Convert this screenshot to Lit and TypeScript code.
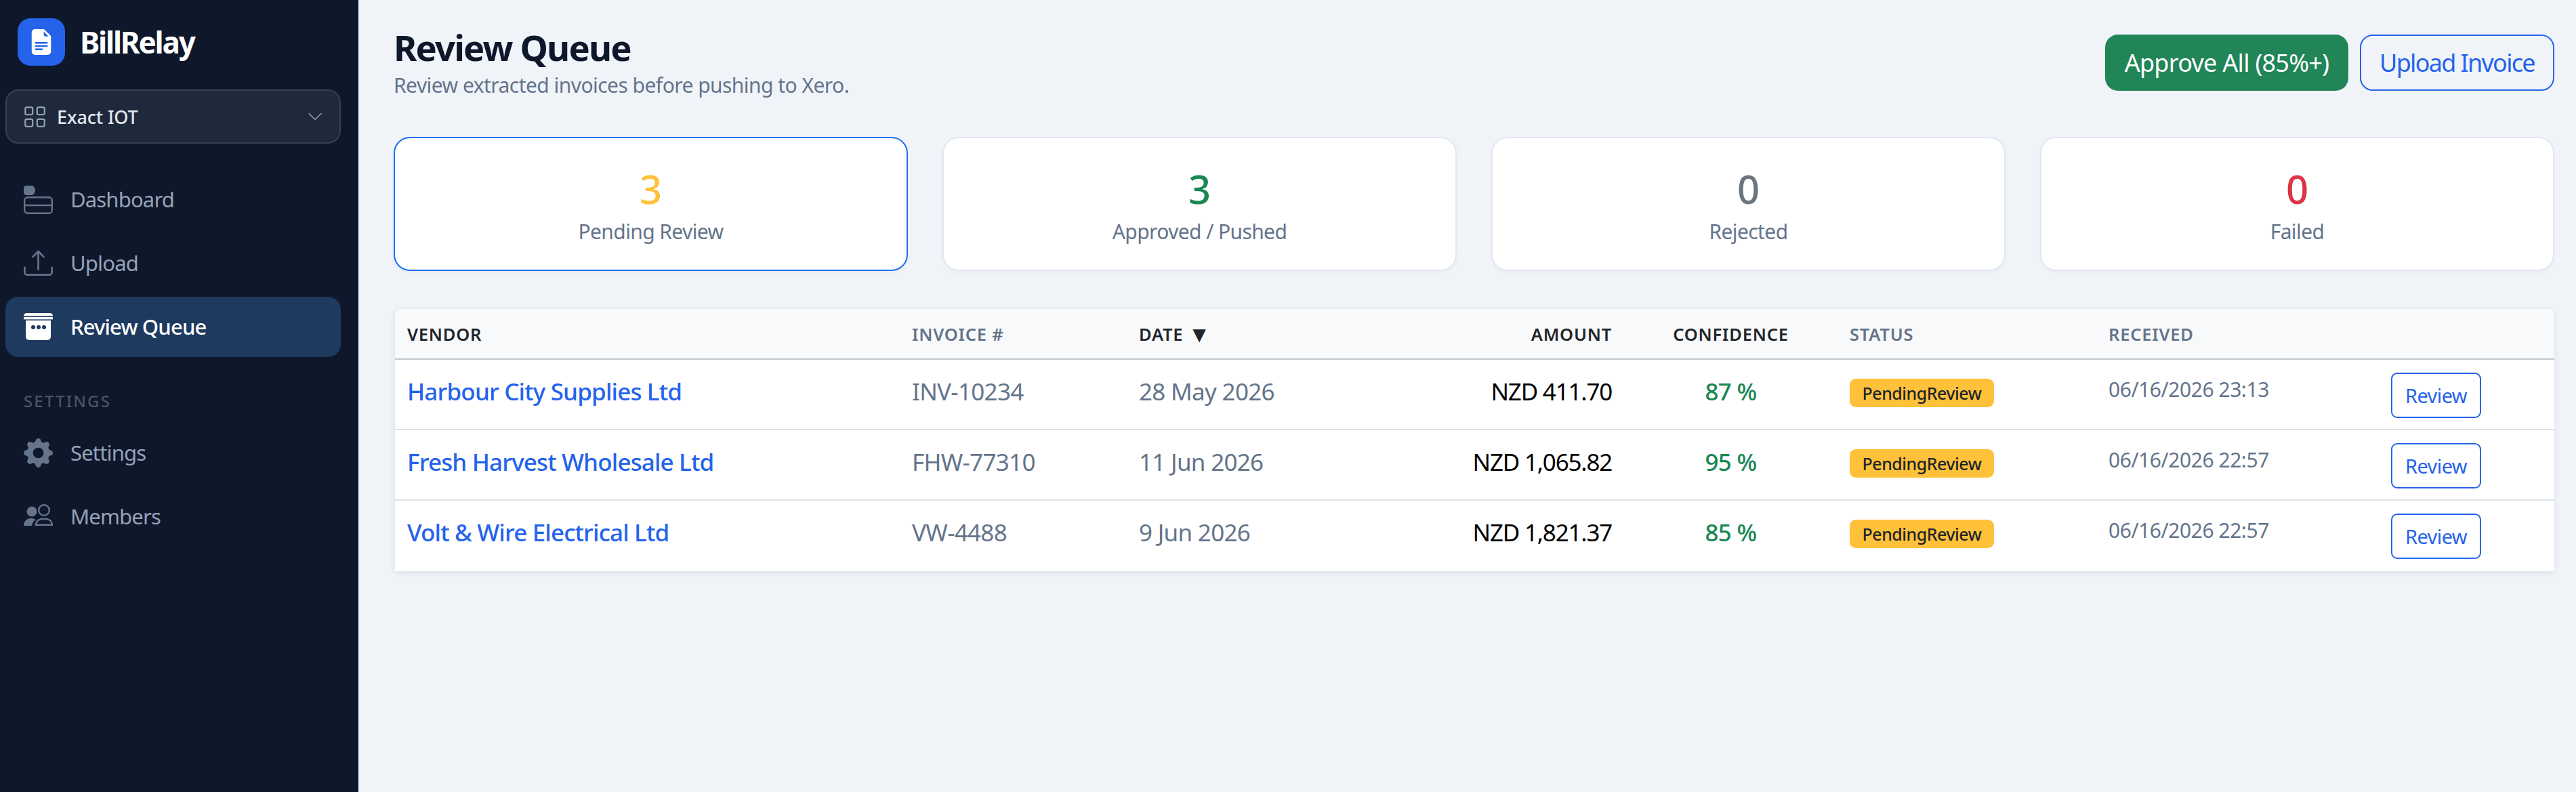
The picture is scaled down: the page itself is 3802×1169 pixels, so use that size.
import { LitElement, html, css, svg } from "lit";
import { customElement } from "lit/decorators.js";

const icons = {
  doc: svg`<path fill="currentColor" d="M9.293 0H4a2 2 0 0 0-2 2v12a2 2 0 0 0 2 2h8a2 2 0 0 0 2-2V4.707A1 1 0 0 0 13.707 4L10 .293A1 1 0 0 0 9.293 0zM9.5 3.5v-2l3 3h-2a1 1 0 0 1-1-1zM4.5 9a.5.5 0 0 1 0-1h7a.5.5 0 0 1 0 1h-7zM4 10.5a.5.5 0 0 1 .5-.5h7a.5.5 0 0 1 0 1h-7a.5.5 0 0 1-.5-.5zm.5 2.5a.5.5 0 0 1 0-1h4a.5.5 0 0 1 0 1h-4z"/>`,
  grid: svg`<path fill="currentColor" d="M1 2.5A1.5 1.5 0 0 1 2.5 1h3A1.5 1.5 0 0 1 7 2.5v3A1.5 1.5 0 0 1 5.5 7h-3A1.5 1.5 0 0 1 1 5.5v-3zM2.5 2a.5.5 0 0 0-.5.5v3a.5.5 0 0 0 .5.5h3a.5.5 0 0 0 .5-.5v-3a.5.5 0 0 0-.5-.5h-3zm6.5.5A1.5 1.5 0 0 1 10.5 1h3A1.5 1.5 0 0 1 15 2.5v3A1.5 1.5 0 0 1 13.5 7h-3A1.5 1.5 0 0 1 9 5.5v-3zm1.5-.5a.5.5 0 0 0-.5.5v3a.5.5 0 0 0 .5.5h3a.5.5 0 0 0 .5-.5v-3a.5.5 0 0 0-.5-.5h-3zM1 10.5A1.5 1.5 0 0 1 2.5 9h3A1.5 1.5 0 0 1 7 10.5v3A1.5 1.5 0 0 1 5.5 15h-3A1.5 1.5 0 0 1 1 13.5v-3zm1.5-.5a.5.5 0 0 0-.5.5v3a.5.5 0 0 0 .5.5h3a.5.5 0 0 0 .5-.5v-3a.5.5 0 0 0-.5-.5h-3zm6.5.5A1.5 1.5 0 0 1 10.5 9h3a1.5 1.5 0 0 1 1.5 1.5v3a1.5 1.5 0 0 1-1.5 1.5h-3A1.5 1.5 0 0 1 9 13.5v-3zm1.5-.5a.5.5 0 0 0-.5.5v3a.5.5 0 0 0 .5.5h3a.5.5 0 0 0 .5-.5v-3a.5.5 0 0 0-.5-.5h-3z"/>`,
  chevron: svg`<path fill="currentColor" fill-rule="evenodd" d="M1.646 4.646a.5.5 0 0 1 .708 0L8 10.293l5.646-5.647a.5.5 0 0 1 .708.708l-6 6a.5.5 0 0 1-.708 0l-6-6a.5.5 0 0 1 0-.708z"/>`,
  upload: svg`<path fill="currentColor" d="M.5 9.9a.5.5 0 0 1 .5.5v2.5a1 1 0 0 0 1 1h12a1 1 0 0 0 1-1v-2.5a.5.5 0 0 1 1 0v2.5a2 2 0 0 1-2 2H2a2 2 0 0 1-2-2v-2.5a.5.5 0 0 1 .5-.5z"/><path fill="currentColor" d="M7.646 1.146a.5.5 0 0 1 .708 0l3 3a.5.5 0 0 1-.708.708L8.5 2.707V11.5a.5.5 0 0 1-1 0V2.707L5.354 4.854a.5.5 0 1 1-.708-.708l3-3z"/>`,
  gear: svg`<path fill="currentColor" d="M9.405 1.05c-.413-1.4-2.397-1.4-2.81 0l-.1.34a1.464 1.464 0 0 1-2.105.872l-.31-.17c-1.283-.698-2.686.705-1.987 1.987l.169.311c.446.82.023 1.841-.872 2.105l-.34.1c-1.4.413-1.4 2.397 0 2.81l.34.1a1.464 1.464 0 0 1 .872 2.105l-.17.31c-.698 1.283.705 2.686 1.987 1.987l.311-.169a1.464 1.464 0 0 1 2.105.872l.1.34c.413 1.4 2.397 1.4 2.81 0l.1-.34a1.464 1.464 0 0 1 2.105-.872l.31.17c1.283.698 2.686-.705 1.987-1.987l-.169-.311a1.464 1.464 0 0 1 .872-2.105l.34-.1c1.4-.413 1.4-2.397 0-2.81l-.34-.1a1.464 1.464 0 0 1-.872-2.105l.17-.31c.698-1.283-.705-2.686-1.987-1.987l-.311.169a1.464 1.464 0 0 1-2.105-.872l-.1-.34zM8 10.93a2.929 2.929 0 1 1 0-5.86 2.929 2.929 0 0 1 0 5.858z"/>`,
};

const dashIcon = svg`<path fill="currentColor" d="M4 1h8c2 0 5 3 5 7s-3 7-5 7H4c-2.500 0-4-1.500-4-4V5c0-2.500 1.500-4 4-4z"/><rect x="1.200" y="18.200" width="40.600" height="23.600" rx="4.500" fill="none" stroke="currentColor" stroke-width="2.400"/><path d="M1 30h41" stroke="currentColor" stroke-width="2.400"/>`;
const queueIcon = svg`<path fill="currentColor" d="M0 5.400C0 2.600 2 1 5 1h33c3 0 5 1.600 5 4.400z"/><rect y="7" width="43" height="3.400" fill="currentColor"/><path fill="currentColor" d="M3 12h37v24a5 5 0 0 1-5 5H8a5 5 0 0 1-5-5z"/><circle cx="14" cy="22" r="3" fill="#1e3a5f"/><circle cx="22" cy="22" r="3" fill="#1e3a5f"/><circle cx="30" cy="22" r="3" fill="#1e3a5f"/>`;
const memberIcon = svg`<circle cx="12" cy="14" r="7.500" fill="currentColor"/><path fill="currentColor" d="M0 35c0-6 4-11 10-11 3 0 6 .6 7.500 2-3 2-5 5-5.500 9z"/><circle cx="30" cy="12" r="7.800" fill="none" stroke="currentColor" stroke-width="2.400"/><path fill="none" stroke="currentColor" stroke-width="2.400" d="M18 33.800c0-6 5-9 12-9s12 3 12 9z"/>`;

const rows = [
  ["Harbour City Supplies Ltd", "INV-10234", "28 May 2026", "NZD 411.70", "87 %", "06/16/2026 23:13"],
  ["Fresh Harvest Wholesale Ltd", "FHW-77310", "11 Jun 2026", "NZD 1,065.82", "95 %", "06/16/2026 22:57"],
  ["Volt & Wire Electrical Ltd", "VW-4488", "9 Jun 2026", "NZD 1,821.37", "85 %", "06/16/2026 22:57"],
];

const stats = [
  ["3", "Pending Review", "amber", true],
  ["3", "Approved / Pushed", "green", false],
  ["0", "Rejected", "grey", false],
  ["0", "Failed", "red", false],
];

@customElement("app-root")
export class AppRoot extends LitElement {
  static styles = css`
    :host {
      display: flex;
      min-height: 1169px;
      width: 100%;
      background: #f0f4f9;
      font-family: "Noto Sans", "Open Sans", sans-serif;
      color: #212529;
    }
    svg { display: block; flex: none; }
    .sidebar {
      width: 529px;
      flex: none;
      background: #0f172a;
      color: #fff;
      box-sizing: border-box;
      padding: 27px 26px 0 8px;
      display: flex;
      flex-direction: column;
    }
    .brand { display: flex; align-items: center; gap: 22px; padding-left: 18px; }
    .logo {
      width: 70px; height: 70px; border-radius: 19px; background: #2563eb;
      display: flex; align-items: center; justify-content: center; color: #fff;
    }
    .logo svg { width: 38px; height: 38px; }
    .brand-name { font-size: 44px; font-weight: 700; letter-spacing: -0.05em; line-height: 1; }
    .tenant {
      margin-top: 35px; height: 80px; box-sizing: border-box;
      background: #1e293b; border: 2.4px solid #334155; border-radius: 19px;
      display: flex; align-items: center; padding: 0 24px;
      color: #e2e8f0; font-size: 27px; font-weight: 500; letter-spacing: -0.005em;
    }
    .tenant .g { width: 35px; height: 35px; color: #94a3b8; margin-right: 15px; }
    .tenant .c { width: 24px; height: 24px; color: #94a3b8; margin-left: auto; }
    .nav { margin-top: 37.500px; display: flex; flex-direction: column; gap: 5px; }
    .nav.second { margin-top: 0; }
    .item {
      height: 89px; border-radius: 19px; display: flex; align-items: center;
      padding-left: 27px; gap: 26px; color: #94a3b8;
      font-size: 31px; letter-spacing: -0.027em;
    }
    .item .ic { width: 43px; height: 43px; color: #64748b; }
    .item.active { background: #1e3a5f; color: #fff; font-weight: 500; }
    .item.active .ic { color: #fff; }
    .section {
      margin: 53px 0 20px; padding-left: 27px; font-size: 24px; line-height: 24px; font-weight: 500;
      letter-spacing: 0.09em; color: #475569;
    }
    .main { flex: 1; min-width: 0; box-sizing: border-box; padding: 40px 32px 0 52px; }
    .head { display: flex; justify-content: space-between; align-items: flex-start; }
    h1 { margin: 0; font-size: 52.500px; line-height: 60px; font-weight: 700; color: #0f172a; letter-spacing: -0.035em; }
    .sub { margin-top: 6px; font-size: 30px; line-height: 40px; color: #64748b; letter-spacing: -0.018em; }
    .actions { display: flex; gap: 17px; margin-top: 11px; }
    .btn {
      height: 83px; box-sizing: border-box; border-radius: 19px; display: flex; align-items: center; justify-content: center;
      font-size: 36px;
    }
    .approve { width: 359px; background: #228558; color: #fff; letter-spacing: -0.02em; }
    .uploadb { width: 287px; border: 2.4px solid #2563eb; color: #2563eb; letter-spacing: -0.047em; }
    .stats { display: grid; grid-template-columns: repeat(4, 1fr); gap: 51px; margin-top: 56px; }
    .stat {
      height: 198px; box-sizing: border-box; background: #fff; border: 2.4px solid #e2e8f0; border-radius: 24px;
      display: flex; flex-direction: column; align-items: center; padding-top: 40px;
      box-shadow: 0 2px 5px rgba(15, 23, 42, 0.04);
    }
    .stat.on { border-color: #1d6ff2; }
    .num { font-size: 58px; line-height: 70px; font-weight: 500; }
    .lbl { font-size: 30px; line-height: 42px; color: #64748b; letter-spacing: -0.02em; margin-top: 7px; }
    .amber { color: #ffc13a; } .green { color: #198754; } .grey { color: #6c757d; } .red { color: #dc3545; }
    .card {
      margin: 56px 0 0 2px; background: #fff; border-radius: 10px 10px 0 0; overflow: hidden;
      box-shadow: 0 2px 10px rgba(15, 23, 42, 0.1);
    }
    table { width: 100%; border-collapse: separate; border-spacing: 0; table-layout: fixed; }
    th {
      background: #f8f9fa; height: 73px; padding: 0 18px; text-align: left; font-size: 25.500px; font-weight: 600;
      letter-spacing: 0.03em; border-bottom: 2.4px solid #c4c7cb; color: #212529; white-space: nowrap;
    }
    th.m { color: #64748b; }
    .arrow { display: inline-block; font-size: 33px; line-height: 1; vertical-align: -2px; }
    td { padding: 19px 18px 16px; vertical-align: top; border-bottom: 2.4px solid #dee2e6; }
    tr:last-child td { border-bottom-color: transparent; }
    .cell { padding-top: 3px; font-size: 35px; line-height: 50px; letter-spacing: -0.02em; white-space: nowrap; }
    .vendor { color: #2563eb; font-weight: 500; letter-spacing: -0.024em; }
    .muted { color: #64748b; }
    .amt { text-align: right; color: #000; letter-spacing: -0.035em; }
    .conf { text-align: center; color: #198754; font-weight: 500; }
    .ctr { text-align: center; }
    .rgt { text-align: right; }
    .badge {
      display: inline-flex; align-items: center; justify-content: center; margin-top: 9px;
      width: 213px; height: 42px; border-radius: 9px; background: #ffc13a; color: #212529;
      font-size: 25px; font-weight: 500; letter-spacing: -0.02em;
    }
    .recv { font-size: 30px; line-height: 43px; color: #64748b; padding-top: 3px; letter-spacing: -0.015em; white-space: nowrap; }
    .rev {
      width: 133px; height: 67px; box-sizing: border-box; border: 2.4px solid #2563eb; border-radius: 9px;
      color: #2563eb; font-size: 29px; letter-spacing: -0.02em; display: flex; align-items: center; justify-content: center;
    }
  `;

  private nav(icon: unknown, label: string, vb: string, active = false) {
    return html`<div class="item ${active ? "active" : ""}"><svg class="ic" viewBox=${vb}>${icon}</svg><span>${label}</span></div>`;
  }

  render() {
    return html`
      <aside class="sidebar">
        <div class="brand">
          <div class="logo"><svg viewBox="0 0 16 16">${icons.doc}</svg></div>
          <div class="brand-name">BillRelay</div>
        </div>
        <div class="tenant">
          <svg class="g" viewBox="0 0 16 16">${icons.grid}</svg>
          <span>Exact IOT</span>
          <svg class="c" viewBox="0 0 16 16">${icons.chevron}</svg>
        </div>
        <nav class="nav">
          ${this.nav(dashIcon, "Dashboard", "0 0 43 43")}
          ${this.nav(icons.upload, "Upload", "0 0 16 16")}
          ${this.nav(queueIcon, "Review Queue", "0 0 43 43", true)}
        </nav>
        <div class="section">SETTINGS</div>
        <nav class="nav second">
          ${this.nav(icons.gear, "Settings", "0 0 16 16")}
          ${this.nav(memberIcon, "Members", "0 0 43 43")}
        </nav>
      </aside>
      <main class="main">
        <header class="head">
          <div>
            <h1>Review Queue</h1>
            <div class="sub">Review extracted invoices before pushing to Xero.</div>
          </div>
          <div class="actions">
            <div class="btn approve">Approve All (85%+)</div>
            <div class="btn uploadb">Upload Invoice</div>
          </div>
        </header>
        <section class="stats">
          ${stats.map(
            ([n, l, c, on]) => html`<div class="stat ${on ? "on" : ""}"><div class="num ${c}">${n}</div><div class="lbl">${l}</div></div>`
          )}
        </section>
        <div class="card">
          <table>
            <colgroup>
              <col style="width:745px" /><col style="width:335px" /><col style="width:335px" /><col style="width:399px" />
              <col style="width:315px" /><col style="width:382px" /><col style="width:417px" /><col />
            </colgroup>
            <thead>
              <tr>
                <th>VENDOR</th>
                <th class="m">INVOICE #</th>
                <th>DATE <span class="arrow">▼</span></th>
                <th class="rgt">AMOUNT</th>
                <th class="ctr">CONFIDENCE</th>
                <th class="m">STATUS</th>
                <th class="m">RECEIVED</th>
                <th></th>
              </tr>
            </thead>
            <tbody>
              ${rows.map(
                (r) => html`<tr>
                  <td><div class="cell vendor">${r[0]}</div></td>
                  <td><div class="cell muted">${r[1]}</div></td>
                  <td><div class="cell muted">${r[2]}</div></td>
                  <td><div class="cell amt">${r[3]}</div></td>
                  <td><div class="cell conf">${r[4]}</div></td>
                  <td><span class="badge">PendingReview</span></td>
                  <td><div class="recv">${r[5]}</div></td>
                  <td><div class="rev">Review</div></td>
                </tr>`
              )}
            </tbody>
          </table>
        </div>
      </main>
    `;
  }
}
